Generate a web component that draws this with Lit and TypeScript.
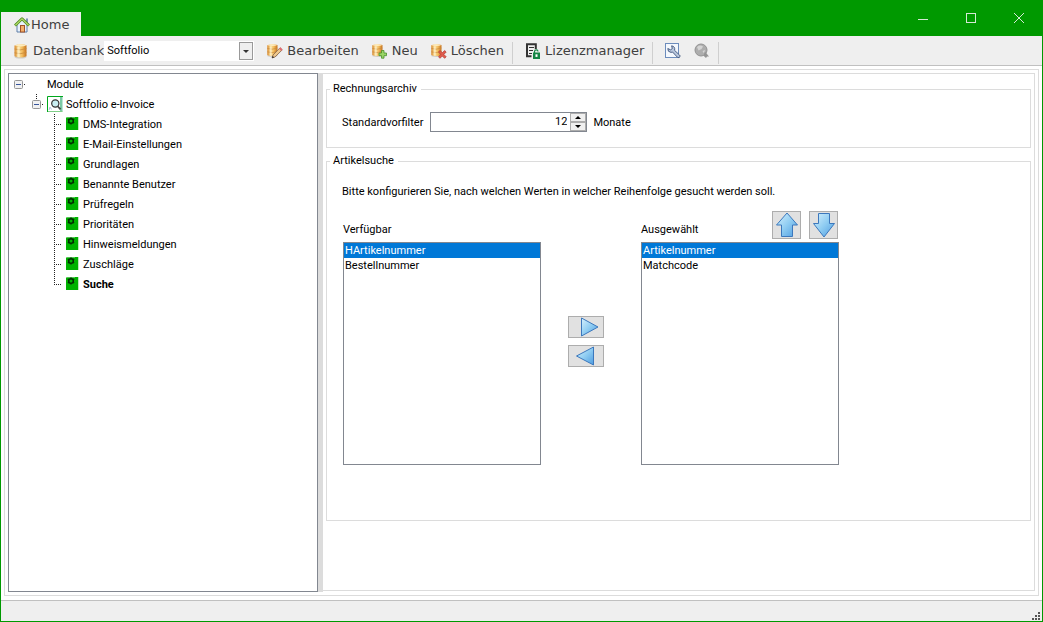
import { LitElement, html, css, svg } from "lit";
import { customElement, state } from "lit/decorators.js";

const cylinder = svg`
  <ellipse cx="7.5" cy="14" rx="6" ry="1.600" fill="#b9b4ac" opacity=".6"/>
  <path d="M1.500 2.600 Q7 .2 13.500 2.200 V13.200 Q7.500 15.800 1.500 13.200 Z" fill="url(#gold)"/>
  <path d="M1.500 2.600 Q7 .2 13.500 2.200 Q9 4.400 1.500 2.600Z" fill="#fdebbd"/>
  <path d="M1.500 6 Q7 8 13.500 5.600 M1.500 9.800 Q7 11.800 13.500 9.400" stroke="#c98a3c" stroke-width=".8" fill="none"/>
  <path d="M5.500 3.800 V14" stroke="#fff4d0" stroke-width="2.400" opacity=".65"/>`;

const gold = svg`<defs><linearGradient id="gold"><stop offset="0" stop-color="#d98a2c"/><stop offset=".35" stop-color="#fbe09c"/><stop offset=".65" stop-color="#f3bb5c"/><stop offset="1" stop-color="#c4701c"/></linearGradient></defs>`;

const icons = {
  home: html`<svg width="16" height="16" viewBox="0 0 16 16" aria-hidden="true">
    <path d="M3 7 L8 2.500 L13 7 V15 H3Z" fill="#e8f1fb" stroke="#5f7fa8"/>
    <rect x="12" y="1.500" width="2" height="4" fill="#7d93b5"/>
    <path d="M1 8.500 L8 1.800 L15 8.500" fill="none" stroke="#4c8a1d" stroke-width="2.800" stroke-linejoin="round"/>
    <path d="M1.400 8.200 L8 1.900 L14.600 8.200" fill="none" stroke="#b5dc6b" stroke-width="1.200"/>
    <rect x="6.500" y="8.500" width="4" height="6.500" fill="#f3b06a" stroke="#a0522a"/></svg>`,
  database: html`<svg width="16" height="16" viewBox="0 0 16 16" aria-hidden="true">${gold}${cylinder}</svg>`,
  edit: html`<svg width="16" height="16" viewBox="0 0 16 16" aria-hidden="true">${gold}<g transform="translate(-1 0) scale(.85 .9)">${cylinder}</g>
    <path d="M5 15 L6 12 L13 4.800 L15.200 6.900 L8 14 Z" fill="#efc88c" stroke="#80624a" stroke-width=".8"/>
    <path d="M12 5.800 L13.500 4.300 L15.600 6.400 L14.200 7.900Z" fill="#e06c72"/><path d="M5 15 L5.700 12.900 L7.200 14.300Z" fill="#222"/></svg>`,
  add: html`<svg width="16" height="16" viewBox="0 0 16 16" aria-hidden="true">${gold}<g transform="translate(-1 0) scale(.85 .9)">${cylinder}</g>
    <path d="M9.500 7.500 H12 V10 H14.500 V12.700 H12 V15.200 H9.500 V12.700 H7 V10 H9.500Z" fill="#9ad566" stroke="#46902c" stroke-width=".8"/></svg>`,
  remove: html`<svg width="16" height="16" viewBox="0 0 16 16" aria-hidden="true">${gold}<g transform="translate(-1 0) scale(.85 .9)">${cylinder}</g>
    <path d="M7.500 9 L9 7.500 L11.300 9.800 L13.600 7.500 L15.200 9 L12.900 11.400 L15.200 13.800 L13.600 15.300 L11.300 13 L9 15.300 L7.500 13.800 L9.800 11.400Z" fill="#df5b4e" stroke="#b23a30" stroke-width=".7"/></svg>`,
  license: html`<svg width="16" height="16" viewBox="0 0 16 16" aria-hidden="true">
    <path d="M6.500 13.200 H2 V1.200 H10.800 V6" fill="none" stroke="#333" stroke-width="2"/>
    <path d="M4 4.500 H9 M4 7.500 H8 M4 10.500 H7" stroke="#333" stroke-width="1"/>
    <path d="M9.500 10 V8.400 Q9.500 6.900 11.300 6.900 Q13 6.900 13 8.400" fill="none" stroke="#158545" stroke-width="1.200"/>
    <rect x="8" y="9.500" width="7" height="6.500" fill="#158545"/><rect x="10.500" y="11.300" width="2" height="2.600" fill="#fff"/></svg>`,
  wrench: html`<svg width="16" height="16" viewBox="0 0 16 16" aria-hidden="true">
    <rect x=".5" y=".5" width="13" height="14" fill="#f4f8fd" stroke="#6c8cbc"/>
    <path d="M2.800 5.500 Q2.500 9 6 9.400 L7.500 9 L12.500 14.300 Q14.200 15.300 15 13.700 Q15.300 12.700 14.500 12 L9.600 7.400 Q10.400 3.400 6.600 2.800 L7.300 5.600 L5.500 6.800Z" fill="#b8c6dc" stroke="#40557c" stroke-width=".9" stroke-linejoin="round"/></svg>`,
  ball: html`<svg width="16" height="16" viewBox="0 0 16 16" aria-hidden="true">
    <circle cx="7" cy="7" r="6" fill="#adadad" stroke="#929292"/>
    <path d="M3 4 Q6 1.500 9 3.500 L7.500 6 L4.500 7.500Z M8.500 8 L11 7 L10 10.500Z" fill="#d4d4d4"/>
    <path d="M11 8.500 L15 13.500 H13 L12 15 L9.500 12.800Z" fill="#949494"/></svg>`,
  search: html`<svg width="16" height="16" viewBox="0 0 16 16" aria-hidden="true">
    <rect width="16" height="16" fill="#fff"/><path d="M13 1 H15.500 V15.500 H13Z" fill="#7cc9a5"/>
    <path d="M.5 16 V.5 H16" fill="none" stroke="#00a81c"/><path d="M1 15.500 H15.500" stroke="#7fce88"/>
    <path d="M2 14 L3 11 L4.500 13.500" stroke="#b3c2dd" fill="none"/>
    <circle cx="8.300" cy="7.500" r="3.600" fill="#c9eef2" stroke="#333" stroke-width="1.200"/>
    <path d="M10.500 10 L13.500 13.300" stroke="#444" stroke-width="1.800"/></svg>`,
  gear: html`<svg width="13" height="14" viewBox="0 0 13 14" aria-hidden="true">
    <rect width="13" height="13" fill="#00b200"/><path d="M0 1 V0 H9" stroke="#a9dca9" stroke-width="1" fill="none"/>
    <path d="M12.500 0 V13" stroke="#bfe9bf"/>
    <circle cx="5" cy="4" r="2.300" fill="none" stroke="#032c03" stroke-width="1.500"/>
    <path d="M5 .4 V1.600 M5 6.400 V7.600 M1.900 2.200 L3 2.800 M8.100 2.200 L7 2.800 M1.900 5.800 L3 5.200 M8.100 5.800 L7 5.200" stroke="#032c03" stroke-width="1.400"/></svg>`,
};

const blueFill = svg`<defs><linearGradient id="blue" x1="0" y1="0" x2="1" y2="1"><stop offset="0" stop-color="#d7f1fd"/><stop offset=".5" stop-color="#90cdf2"/><stop offset="1" stop-color="#4c9be0"/></linearGradient></defs>`;
const arrow = (w: number, h: number, d: string) => html`<svg width=${w} height=${h} viewBox="0 0 ${w} ${h}" aria-hidden="true">${blueFill}<path d=${d} fill="url(#blue)" stroke="#3c78bd" stroke-linejoin="round"/></svg>`;
const arrows = {
  up: arrow(27, 26, "M14 1 L24.500 13 H19.500 V24.500 H8.500 V13 H3.500Z"),
  down: arrow(27, 26, "M8.500 1.500 H19.500 V11.500 H24.500 L14 25 L3.500 11.500 H8.500Z"),
  right: arrow(34, 20, "M12.500 1 L29 10 L12.500 19Z"),
  left: arrow(34, 20, "M24.500 1 L7.500 10 L24.500 19Z"),
};

const expander = html`<svg width="12" height="20" viewBox="0 0 12 20" aria-hidden="true">
  <rect x=".5" y="6.500" width="8" height="8" rx="1" fill="#f1f1f1" stroke="#969696"/>
  <path d="M2 10.500 H7" stroke="#37559c"/><path d="M10 10.500 H12" stroke="#222" stroke-dasharray="1 1"/></svg>`;

const childExpander = html`<svg width="12" height="20" viewBox="0 0 12 20" aria-hidden="true">
  <path d="M4.500 0 V6" stroke="#222" stroke-dasharray="1 1"/>
  <rect x=".5" y="6.500" width="8" height="8" rx="1" fill="#f1f1f1" stroke="#969696"/>
  <path d="M2 10.500 H7" stroke="#37559c"/><path d="M10 10.500 H12" stroke="#222" stroke-dasharray="1 1"/></svg>`;

@customElement("app-root")
export class AppRoot extends LitElement {
  @state() private months = 12;

  static styles = css`
    :host { display: block; font: 11px/16px Roboto, sans-serif; color: #000; }
    * { box-sizing: border-box; }
    button, input, select { font: inherit; color: inherit; margin: 0; padding: 0; border-radius: 0; }
    button { border: 0; background: none; display: flex; align-items: center; justify-content: center; }
    svg { display: block; flex: none; }
    .window { min-height: 100vh; display: flex; flex-direction: column; background: #fff; border: solid #009900; border-width: 0 1px 1px; }
    .title { height: 36px; background: #009900; display: flex; justify-content: space-between; }
    .tab { align-self: flex-end; height: 24px; width: 80px; background: #efefef; justify-content: flex-start; padding: 2px 0 0 13px; gap: 1px; }
    .large { font: 13px/20px "DejaVu Sans", sans-serif; color: #404040; }
    .controls { display: flex; height: 36px; padding-right: 3px; }
    .controls button { width: 40px; margin-left: 8px; }
    .toolbar { height: 30px; display: flex; background: #efefef; border-bottom: 1px solid #c0c0c0; }
    .group { display: flex; align-items: center; gap: 13px; padding: 0 9px 0 12px; position: relative; }
    .group::after { content: ""; width: 1px; height: 22px; background: #cfcfcf; position: absolute; right: 0; top: 6px; }
    .tool { display: flex; align-items: center; gap: 4px; }
    .database { display: flex; align-items: center; }
    .combo { display: grid; align-items: center; justify-items: end; width: 150px; height: 20px; background: #fff; }
    .combo > * { grid-area: 1 / 1; }
    .combo select { appearance: none; width: 100%; height: 20px; border: 0; background: transparent; color: #000; padding-left: 3px; font: 11px/16px Roboto, sans-serif; }
    .combo svg { pointer-events: none; }
    .frame { flex: 1; display: flex; margin: 3px 3px 4px; padding: 3px; border: 1px solid #dcdcdc; }
    .tree { width: 310px; border: 1px solid #828790; }
    .tree ul { list-style: none; margin: 0; padding: 0; }
    .row { display: flex; align-items: center; height: 20px; }
    .row span { padding-top: 2px; }
    .root > .row { padding-left: 5px; gap: 21px; }
    .branch > .row { padding-left: 23px; gap: 3px; }
    .leaf { padding-left: 45px; gap: 4px; }
    .selected { font-weight: bold; }
    .splitter { width: 5px; background: #dcdcdc; }
    .panel { flex: 1; margin-bottom: 1px; padding: 7px 3px 0; border: solid #dcdcdc; border-width: 1px 1px 1px 0; }
    fieldset { margin: 0 0 5px; padding: 0 15px; border: 1px solid #dcdcdc; min-width: 0; }
    legend { padding: 0 4px 0 3px; margin-left: -12px; }
    .filter { display: flex; align-items: center; gap: 6px; padding: 15px 0; }
    .filter > label { padding: 1px 1px 0 0; }
    .filter > span { padding-top: 1px; }
    .spin { display: flex; width: 157px; height: 20px; border: 1px solid #828790; background: #fff; }
    .spin input { flex: 1; min-width: 0; border: 0; text-align: right; padding-right: 3px; background: none; }
    .steps { display: grid; grid-template-rows: 1fr 1fr; width: 16px; }
    .steps button { background: #f0f0f0; border: 1px solid #adadad; }
    p { margin: 15px 0 11px; }
    .lists { display: flex; padding: 0 0 55px 1px; }
    .list { width: 198px; display: grid; }
    .list header { display: flex; align-items: center; justify-content: space-between; height: 30px; padding-right: 1px; margin-bottom: 1px; }
    .list header div { display: flex; gap: 8px; margin-bottom: 3px; }
    .list label { padding-top: 8px; }
    .list select { width: 100%; height: 223px; border: 1px solid #828790; background: #fff; overflow: hidden; outline: none; }
    .list option { height: 15px; min-height: 15px; line-height: 15px; padding: 1px 1px 0; }
    .list option:checked { background: linear-gradient(#0078d7, #0078d7); color: #fff; -webkit-text-fill-color: #fff; }
    .move { display: flex; flex-direction: column; gap: 7px; padding-top: 105px; margin: 0 37px 0 27px; }
    .face { background: #e1e1e1; border: 1px solid #adadad; }
    .square { width: 29px; height: 28px; }
    .wide { width: 36px; height: 22px; }
    .status { height: 21px; background: #efefef; border-top: 1px solid #c0c0c0; display: flex; justify-content: flex-end; align-items: flex-end; padding: 0 1px 0; }
  `;

  private leaf(text: string, last: boolean) {
    return html`<li class="row leaf ${last ? "selected" : ""}">
      <svg width="8" height="20" viewBox="0 0 8 20" aria-hidden="true"><path d="M.5 0 V${last ? 11 : 20} M2 10.500 H8" stroke="#222" stroke-dasharray="1 1"/></svg>
      ${icons.gear}<span>${text}</span></li>`;
  }

  private step(by: number) {
    this.months = Math.max(0, this.months + by);
  }

  render() {
    const modules = ["DMS-Integration", "E-Mail-Einstellungen", "Grundlagen", "Benannte Benutzer", "Prüfregeln", "Prioritäten", "Hinweismeldungen", "Zuschläge", "Suche"];
    return html`<div class="window">
      <header class="title">
        <button class="tab large">${icons.home}<span>Home</span></button>
        <div class="controls">
          <button aria-label="Minimieren"><svg width="12" height="12"><path d="M1 7.500 H11" stroke="#d5e8d5"/></svg></button>
          <button aria-label="Maximieren"><svg width="12" height="12"><rect x="1.500" y="1.500" width="9" height="9" fill="none" stroke="#d5e8d5"/></svg></button>
          <button aria-label="Schließen"><svg width="12" height="12"><path d="M1 1 L11 11 M11 1 L1 11" stroke="#d5e8d5"/></svg></button>
        </div>
      </header>
      <nav class="toolbar large">
        <div class="group">
          <div class="database"><label class="tool" for="db">${icons.database}<span>Datenbank</span></label>
            <div class="combo"><select id="db"><option>Softfolio</option></select>
              <svg width="15" height="20" aria-hidden="true"><rect x=".5" y="1.500" width="13" height="17" fill="#efefef" stroke="#999"/><path d="M4 9 H10 L7 12Z" fill="#333"/></svg></div>
          </div>
          <button class="tool">${icons.edit}<span>Bearbeiten</span></button>
          <button class="tool">${icons.add}<span>Neu</span></button>
          <button class="tool">${icons.remove}<span>Löschen</span></button>
        </div>
        <div class="group"><button class="tool">${icons.license}<span>Lizenzmanager</span></button></div>
        <div class="group"><button aria-label="Einstellungen">${icons.wrench}</button><button aria-label="Verbindung">${icons.ball}</button></div>
      </nav>
      <main class="frame">
        <nav class="tree"><ul><li class="root"><div class="row">${expander}<span>Module</span></div>
          <ul><li class="branch"><div class="row">${childExpander}${icons.search}<span>Softfolio e-Invoice</span></div>
            <ul>${modules.map((m, i) => this.leaf(m, i === modules.length - 1))}</ul></li></ul></li></ul></nav>
        <div class="splitter"></div>
        <section class="panel">
          <fieldset><legend>Rechnungsarchiv</legend>
            <div class="filter"><label for="months">Standardvorfilter</label>
              <div class="spin"><input id="months" inputmode="numeric" .value=${String(this.months)}>
                <div class="steps">
                  <button aria-label="Mehr" @click=${() => this.step(1)}><svg width="6" height="3"><path d="M0 3 L3 0 L6 3Z"/></svg></button>
                  <button aria-label="Weniger" @click=${() => this.step(-1)}><svg width="6" height="3"><path d="M0 0 H6 L3 3Z"/></svg></button>
                </div></div>
              <span>Monate</span></div>
          </fieldset>
          <fieldset><legend>Artikelsuche</legend>
            <p>Bitte konfigurieren Sie, nach welchen Werten in welcher Reihenfolge gesucht werden soll.</p>
            <div class="lists">
              <div class="list"><header><label for="available">Verfügbar</label></header>
                <select id="available" size="14"><option selected>HArtikelnummer</option><option>Bestellnummer</option></select></div>
              <div class="move"><button class="face wide" aria-label="Hinzufügen">${arrows.right}</button><button class="face wide" aria-label="Entfernen">${arrows.left}</button></div>
              <div class="list"><header><label for="chosen">Ausgewählt</label>
                <div><button class="face square" aria-label="Nach oben">${arrows.up}</button><button class="face square" aria-label="Nach unten">${arrows.down}</button></div></header>
                <select id="chosen" size="14"><option selected>Artikelnummer</option><option>Matchcode</option></select></div>
            </div>
          </fieldset>
        </section>
      </main>
      <footer class="status"><svg width="9" height="9" fill="#555" aria-hidden="true"><path d="M6 0h2v2h-2z M3 3h2v2h-2z M6 3h2v2h-2z M0 6h2v2h-2z M3 6h2v2h-2z M6 6h2v2h-2z"/></svg></footer>
    </div>`;
  }
}
